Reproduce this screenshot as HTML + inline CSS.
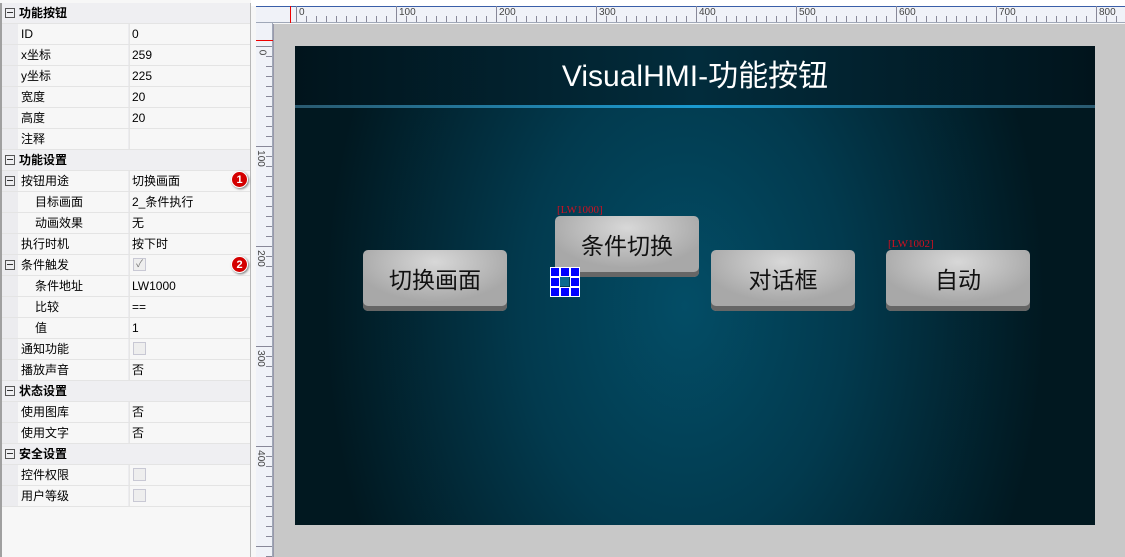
<!DOCTYPE html>
<html><head><meta charset="utf-8"><style>
*{margin:0;padding:0;box-sizing:border-box}
body{width:1125px;height:557px;overflow:hidden;background:#f7f7f7;font-family:"Liberation Sans","Noto Sans CJK SC",sans-serif;font-size:12px;color:#000;position:relative}
.panel{position:absolute;left:0;top:0;width:251px;height:557px;background:#f7f7f7;border-left:2px solid #a0a0a0;border-right:1px solid #b8b8b8}
.row{position:absolute;left:2px;width:248px;height:21px;line-height:20px}
.row .k{position:absolute;left:16px;top:0;width:110px;height:20px;background:#f7f7f7;padding-left:3px}
.row .v{position:absolute;left:127px;top:0;width:121px;height:20px;background:#f7f7f7;padding-left:2px;border-left:1px solid #e6e6e6}
.row{background:#ececef;border-bottom:1px solid #e4e4e4}
.cat{background:#efeff2}
.cat .t{position:absolute;left:17px;font-weight:bold}
.box{position:absolute;left:3px;top:5px;width:10px;height:10px;border:1px solid #555;font-size:0}
.box:after{content:"";position:absolute;left:1px;top:3px;width:6px;height:1px;background:#333}
.cb{position:absolute;left:3px;top:3px;width:13px;height:13px;border:1px solid #c8c8d4;background:#eee}
.badge{position:absolute;left:231px;width:17px;height:17px;border-radius:50%;background:#d40000;color:#fff;font-weight:bold;font-size:11px;text-align:center;line-height:16px;box-shadow:1px 1px 2px #777;border:1px solid #fff}
.rt{position:absolute;left:256px;top:6px;width:869px;height:17px;background:#f0f2f8;border-top:1px solid #3a5ea8;border-bottom:1px solid #a0a8b8}
.rl{position:absolute;left:256px;top:23px;width:17px;height:534px;background:#f0f2f8;border-right:1px solid #a0a8b8}
.canvas{position:absolute;left:273px;top:24px;width:852px;height:533px;background:#c8c8c8;border-left:1px solid #99a}
.scr{position:absolute;left:295px;top:46px;width:800px;height:479px;background:radial-gradient(ellipse 360px 520px at 390px 260px,#034d66 0%,#023a4e 45%,#011820 100%)}
.title{position:absolute;left:0;top:0;width:800px;height:60px;background:linear-gradient(90deg,#01141c,#022c3c 50%,#01141c);color:#fff;font-size:30px;text-align:center;line-height:62px}
.line{position:absolute;left:0;top:59px;width:800px;height:3px;background:linear-gradient(90deg,#2a5a70,#1a9ad0 50%,#2a5a70)}
.btn{position:absolute;width:144px;height:61px;border-radius:5px;background:radial-gradient(ellipse 80px 40px at 72px 12px,#d8d8d8,#a8a8a8);box-shadow:inset 0 -5px 0 #666;font-size:23px;text-align:center;line-height:60px;color:#111}
.lbl{position:absolute;color:#d01020;font-family:"Liberation Serif",serif;font-size:11px}
.num{position:absolute;font-size:10px;color:#444}
.h{position:absolute;width:8px;height:8px;background:#00f;outline:1px solid #fff}
</style></head><body>
<div class="panel"></div>
<div style="position:absolute;left:0;top:0;width:251px;height:3px;background:#f7f7f7"></div>
<div class="row cat" style="top:3px"><div class="box"></div><span class="t">功能按钮</span></div>
<div class="row" style="top:24px"><div class="k">ID</div><div class="v">0</div></div>
<div class="row" style="top:45px"><div class="k">x坐标</div><div class="v">259</div></div>
<div class="row" style="top:66px"><div class="k">y坐标</div><div class="v">225</div></div>
<div class="row" style="top:87px"><div class="k">宽度</div><div class="v">20</div></div>
<div class="row" style="top:108px"><div class="k">高度</div><div class="v">20</div></div>
<div class="row" style="top:129px"><div class="k">注释</div><div class="v"></div></div>
<div class="row cat" style="top:150px"><div class="box"></div><span class="t">功能设置</span></div>
<div class="row" style="top:171px"><div class="box"></div><div class="k">按钮用途</div><div class="v">切换画面</div></div>
<div class="row" style="top:192px"><div class="k" style="padding-left:17px">目标画面</div><div class="v">2_条件执行</div></div>
<div class="row" style="top:213px"><div class="k" style="padding-left:17px">动画效果</div><div class="v">无</div></div>
<div class="row" style="top:234px"><div class="k">执行时机</div><div class="v">按下时</div></div>
<div class="row" style="top:255px"><div class="box"></div><div class="k">条件触发</div><div class="v"><div class="cb" style="font-size:10px;line-height:11px;text-align:center;color:#777">✓</div></div></div>
<div class="row" style="top:276px"><div class="k" style="padding-left:17px">条件地址</div><div class="v">LW1000</div></div>
<div class="row" style="top:297px"><div class="k" style="padding-left:17px">比较</div><div class="v">==</div></div>
<div class="row" style="top:318px"><div class="k" style="padding-left:17px">值</div><div class="v">1</div></div>
<div class="row" style="top:339px"><div class="k">通知功能</div><div class="v"><div class="cb"></div></div></div>
<div class="row" style="top:360px"><div class="k">播放声音</div><div class="v">否</div></div>
<div class="row cat" style="top:381px"><div class="box"></div><span class="t">状态设置</span></div>
<div class="row" style="top:402px"><div class="k">使用图库</div><div class="v">否</div></div>
<div class="row" style="top:423px"><div class="k">使用文字</div><div class="v">否</div></div>
<div class="row cat" style="top:444px"><div class="box"></div><span class="t">安全设置</span></div>
<div class="row" style="top:465px"><div class="k">控件权限</div><div class="v"><div class="cb"></div></div></div>
<div class="row" style="top:486px"><div class="k">用户等级</div><div class="v"><div class="cb"></div></div></div>
<div class="badge" style="top:171px">1</div>
<div class="badge" style="top:256px">2</div>

<div style="position:absolute;left:251px;top:0;width:874px;height:6px;background:#fff"></div>
<div class="rt"><div style="position:absolute;left:40px;right:0;bottom:0;height:6px;background:repeating-linear-gradient(90deg,#889 0 1px,transparent 1px 10px)"></div><div style="position:absolute;left:40px;right:0;bottom:0;height:16px;background:repeating-linear-gradient(90deg,#889 0 1px,transparent 1px 100px)"></div>
<span class="num" style="left:43px;top:0">0</span><span class="num" style="left:143px;top:0">100</span><span class="num" style="left:243px;top:0">200</span><span class="num" style="left:343px;top:0">300</span><span class="num" style="left:443px;top:0">400</span><span class="num" style="left:543px;top:0">500</span><span class="num" style="left:643px;top:0">600</span><span class="num" style="left:743px;top:0">700</span><span class="num" style="left:843px;top:0">800</span></div>
<div style="position:absolute;left:290px;top:6px;width:1px;height:17px;background:#e00"></div>
<div class="rl"><div style="position:absolute;top:23px;bottom:0;right:0;width:6px;background:repeating-linear-gradient(180deg,#889 0 1px,transparent 1px 10px)"></div><div style="position:absolute;top:23px;bottom:0;right:0;width:16px;background:repeating-linear-gradient(180deg,#889 0 1px,transparent 1px 100px)"></div>
<span class="num" style="left:3px;top:24px;transform:rotate(90deg)">0</span><span class="num" style="left:-4px;top:130px;transform:rotate(90deg)">100</span><span class="num" style="left:-4px;top:230px;transform:rotate(90deg)">200</span><span class="num" style="left:-4px;top:330px;transform:rotate(90deg)">300</span><span class="num" style="left:-4px;top:430px;transform:rotate(90deg)">400</span></div>
<div style="position:absolute;left:256px;top:40px;width:17px;height:1px;background:#e00"></div>
<div class="canvas"></div>
<div class="scr">
<div class="title">VisualHMI-功能按钮</div><div class="line"></div>
</div>
<div class="btn" style="left:363px;top:250px">切换画面</div>
<div class="btn" style="left:555px;top:216px">条件切换</div>
<div class="btn" style="left:711px;top:250px">对话框</div>
<div class="btn" style="left:886px;top:250px">自动</div>
<div class="lbl" style="left:557px;top:204px">[LW1000]</div>
<div class="lbl" style="left:888px;top:238px">[LW1002]</div>
<div style="position:absolute;left:560px;top:277px;width:9px;height:9px;background:#0b6a90"></div>
<div class="h" style="left:551px;top:268px"></div><div class="h" style="left:561px;top:268px"></div><div class="h" style="left:571px;top:268px"></div>
<div class="h" style="left:551px;top:278px"></div><div class="h" style="left:571px;top:278px"></div>
<div class="h" style="left:551px;top:288px"></div><div class="h" style="left:561px;top:288px"></div><div class="h" style="left:571px;top:288px"></div>
</body></html>
